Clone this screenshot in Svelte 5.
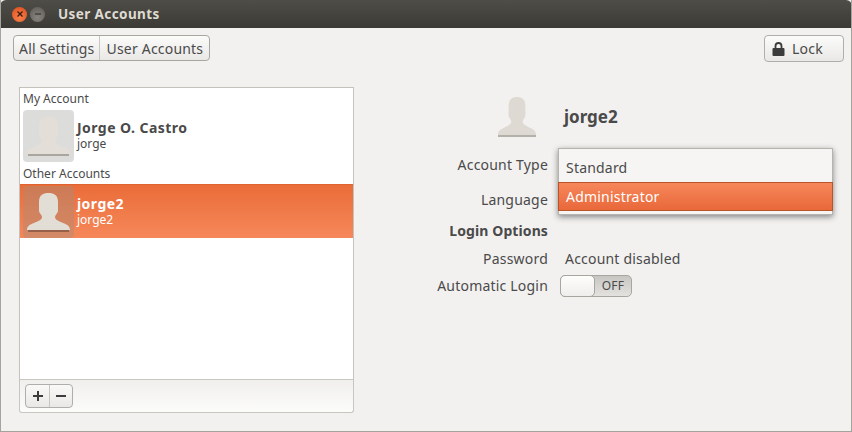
<script>
  const silhouette = "M21.500 0C27 0 31 2 31 9L31 18C31 20 28 22 28 24C28 27 32 28 36 30C40 31.500 43 33 43 37L0 37C0 33 3 31.500 7 30C11 28 15 27 15 24C15 22 12 20 12 18L12 9C12 2 16 0 21.500 0Z";
</script>

<div class="window">
  <header class="titlebar">
    <span class="wbtn close"><svg viewBox="0 0 8 8" width="8" height="8"><path d="M1.500 1.500l5 5M6.500 1.500l-5 5" stroke="#3a1a0c" stroke-width="1.300"/></svg></span>
    <span class="wbtn min"><svg viewBox="0 0 8 8" width="8" height="8"><path d="M1 4h6" stroke="#3a3a36" stroke-width="1.300"/></svg></span>
    <span class="title">User Accounts</span>
  </header>

  <div class="toolbar">
    <div class="crumbs">
      <span class="crumb">All Settings</span>
      <span class="crumb">User Accounts</span>
    </div>
    <button class="lock">
      <svg viewBox="0 0 13 14" width="13" height="14"><path d="M3.500 6V4a3 3 0 0 1 6 0v2" fill="none" stroke="#3c3c3c" stroke-width="1.800"/><rect x="0.500" y="6" width="12" height="8" rx="1" fill="#3c3c3c"/></svg>
      Lock
    </button>
  </div>

  <main class="content">
    <section class="panel">
      <div class="list">
        <div class="heading">My Account</div>
        <div class="account">
          <div class="face"><svg viewBox="0 0 43 39" width="43" height="39"><path d={silhouette} fill="#e3dfd8"/><rect x="1" y="37" width="41" height="2" fill="#a9a69f"/></svg></div>
          <div class="names"><strong>Jorge O. Castro</strong><span>jorge</span></div>
        </div>
        <div class="heading other">Other Accounts</div>
        <div class="account selected">
          <div class="face"><svg viewBox="0 0 43 39" width="43" height="39"><path d={silhouette} fill="#e2ddd5"/><rect x="1" y="37" width="41" height="2" fill="#96604a"/></svg></div>
          <div class="names"><strong>jorge2</strong><span>jorge2</span></div>
        </div>
      </div>
      <div class="listbar">
        <div class="addremove">
          <span class="sq"><svg viewBox="0 0 12 12" width="12" height="12"><path d="M6 1v10M1 6h10" stroke="#3c3c3c" stroke-width="2"/></svg></span>
          <span class="sq"><svg viewBox="0 0 12 12" width="12" height="12"><path d="M1 6h10" stroke="#3c3c3c" stroke-width="2"/></svg></span>
        </div>
      </div>
    </section>

    <section class="details">
      <div class="who">
        <svg viewBox="0 0 43 39" width="38" height="40" preserveAspectRatio="none"><path d={silhouette} fill="#dedad3"/><rect x="0" y="37" width="43" height="2" fill="#b4b1aa"/></svg>
        <strong>jorge2</strong>
      </div>
      <div class="form">
        <div class="label">Account Type</div>
        <div class="value"></div>
        <div class="label">Language</div>
        <div class="value"></div>
        <div class="label bold">Login Options</div>
        <div class="value"></div>
        <div class="label">Password</div>
        <div class="value">Account disabled</div>
        <div class="label">Automatic Login</div>
        <div class="value">
          <div class="switch"><span class="knob"></span><span class="off">OFF</span></div>
        </div>
      </div>
      <div class="menu">
        <div class="opt">Standard</div>
        <div class="opt active">Administrator</div>
      </div>
    </section>
  </main>
</div>

<style>
  :global(body) { margin: 0; background: #f2f1f0; }
  .window {
    width: 852px; height: 432px; box-sizing: border-box;
    display: flex; flex-direction: column;
    background: #f2f1f0; overflow: hidden;
    font-family: "Noto Sans", "Open Sans", sans-serif; font-size: 14px; color: #4a4a4a;
    border-left: 1px solid #a5a39e; border-right: 1px solid #a5a39e; border-bottom: 1px solid #a5a39e;
    letter-spacing: .2px;
  }
  .titlebar {
    height: 28px; flex: none; margin: 0 -1px; padding-left: 12px;
    display: flex; align-items: center; gap: 3px;
    background: linear-gradient(#4f4d47, #3b3a35);
    border-radius: 6px 6px 0 0;
  }
  .wbtn { width: 15px; height: 15px; border-radius: 50%; display: flex; align-items: center; justify-content: center; }
  .close { background: radial-gradient(circle at 50% 70%, #f7804a, #dc4c1c); }
  .min { background: radial-gradient(circle at 50% 70%, #85837c, #5c5a54); }
  .title { margin-left: 10px; color: #dfdbd2; font-weight: 700; font-size: 13.500px; letter-spacing: .4px; }

  .toolbar { height: 59px; flex: none; display: flex; justify-content: space-between; align-items: flex-start; padding: 7px 7px 0 12px; box-sizing: border-box; }
  .crumbs { display: flex; height: 26px; border: 1px solid #a8a6a1; border-radius: 4px; background: linear-gradient(#fbfbfa, #e9e8e6); box-sizing: border-box; }
  .crumb { display: flex; align-items: center; padding: 0 5px; }
  .crumb + .crumb { border-left: 1px solid #c8c6c2; padding: 0 6px; }
  .lock { height: 27px; width: 80px; display: flex; align-items: center; gap: 7px; justify-content: flex-start; margin: 0; padding: 0 0 0 7px; font: inherit; letter-spacing: inherit; color: inherit; border: 1px solid #b0aeaa; border-radius: 4px; background: linear-gradient(#fbfbfa, #e9e8e6); box-sizing: border-box; }

  .content { flex: 1; display: flex; min-height: 0; padding: 0 0 18px 18px; }
  .panel { width: 335px; flex: none; display: flex; flex-direction: column; }
  .list { flex: 1; background: #fff; border: 1px solid #c4c2bd; border-bottom: 1px solid #c8c6c1; box-sizing: border-box; }
  .heading { height: 21px; line-height: 21px; padding-left: 3px; font-size: 12px; letter-spacing: 0; }
  .other { height: 22px; line-height: 23px; margin-top: -1px; }
  .account { height: 54px; display: flex; align-items: center; padding-left: 3px; gap: 3px; box-sizing: border-box; }
  .face { width: 51px; height: 52px; border-radius: 4px; background: #dcdcda; display: flex; align-items: flex-end; justify-content: center; overflow: hidden; box-sizing: border-box; padding-bottom: 6px; }
  .names { display: flex; flex-direction: column; margin-top: -1px; }
  .names strong { font-size: 14px; line-height: 16px; font-weight: 700; letter-spacing: .45px; }
  .names span { font-size: 12px; line-height: 14px; margin-top: 1px; letter-spacing: 0; }
  .selected { background: linear-gradient(#ea6d39, #f6875a); color: #fff; border-top: 1px solid #dd6330; }
  .selected .face { background: rgba(170, 140, 120, .45); }

  .listbar { height: 33px; flex: none; display: flex; align-items: center; padding-left: 5px; background: linear-gradient(#f0efed, #fcfcfb); border: 1px solid #c8c6c1; border-top: 0; border-radius: 0 0 3px 3px; box-sizing: border-box; }
  .addremove { display: flex; height: 24px; border: 1px solid #b0aeaa; border-radius: 4px; background: linear-gradient(#f9f9f8, #e9e8e6); box-sizing: border-box; }
  .sq { width: 23px; display: flex; align-items: center; justify-content: center; }
  .sq + .sq { width: 23px; border-left: 1px solid #c8c6c2; box-sizing: border-box; }

  .details { flex: 1; position: relative; min-width: 0; }
  .who { height: 58px; padding-left: 144px; padding-bottom: 2px; display: flex; align-items: center; gap: 28px; }
  .who svg { margin-top: 2px; }
  .who strong { font-size: 17px; font-weight: 700; letter-spacing: 0; }
  .form { margin-top: 8px; display: grid; grid-template-columns: 194px 1fr; column-gap: 17px; grid-template-rows: 35px 31px 28px 27px 23px; }
  .label { text-align: right; line-height: 20px; }
  .value { line-height: 20px; }
  .bold { font-weight: 700; letter-spacing: .1px; }
  .switch { width: 72px; height: 22px; margin: -1px 0 0 -5px; border: 1px solid #a8a6a1; border-radius: 5px; display: flex; background: linear-gradient(#c8c6c2, #e3e2df); box-sizing: border-box; }
  .knob { width: 35px; margin: -1px 0 -1px -1px; border: 1px solid #a8a6a1; border-radius: 5px; background: linear-gradient(#fdfdfc, #efeeec); box-sizing: border-box; }
  .off { flex: 1; text-align: center; font-size: 12px; line-height: 20px; }
  .menu { position: absolute; left: 204px; top: 61px; width: 275px; height: 67px; box-sizing: border-box; background: #f6f5f4; border: 1px solid #b5b3ae; box-shadow: 0 2px 6px rgba(0,0,0,.45); }
  .opt { height: 33px; padding: 3px 0 0 7px; display: flex; align-items: center; box-sizing: border-box; }
  .active { height: 29px; padding: 0 0 0 7px; background: linear-gradient(#f6875a, #e9683a); color: #fff; border: 1px solid #b8542a; margin: 0 -1px; width: 275px; }
</style>
